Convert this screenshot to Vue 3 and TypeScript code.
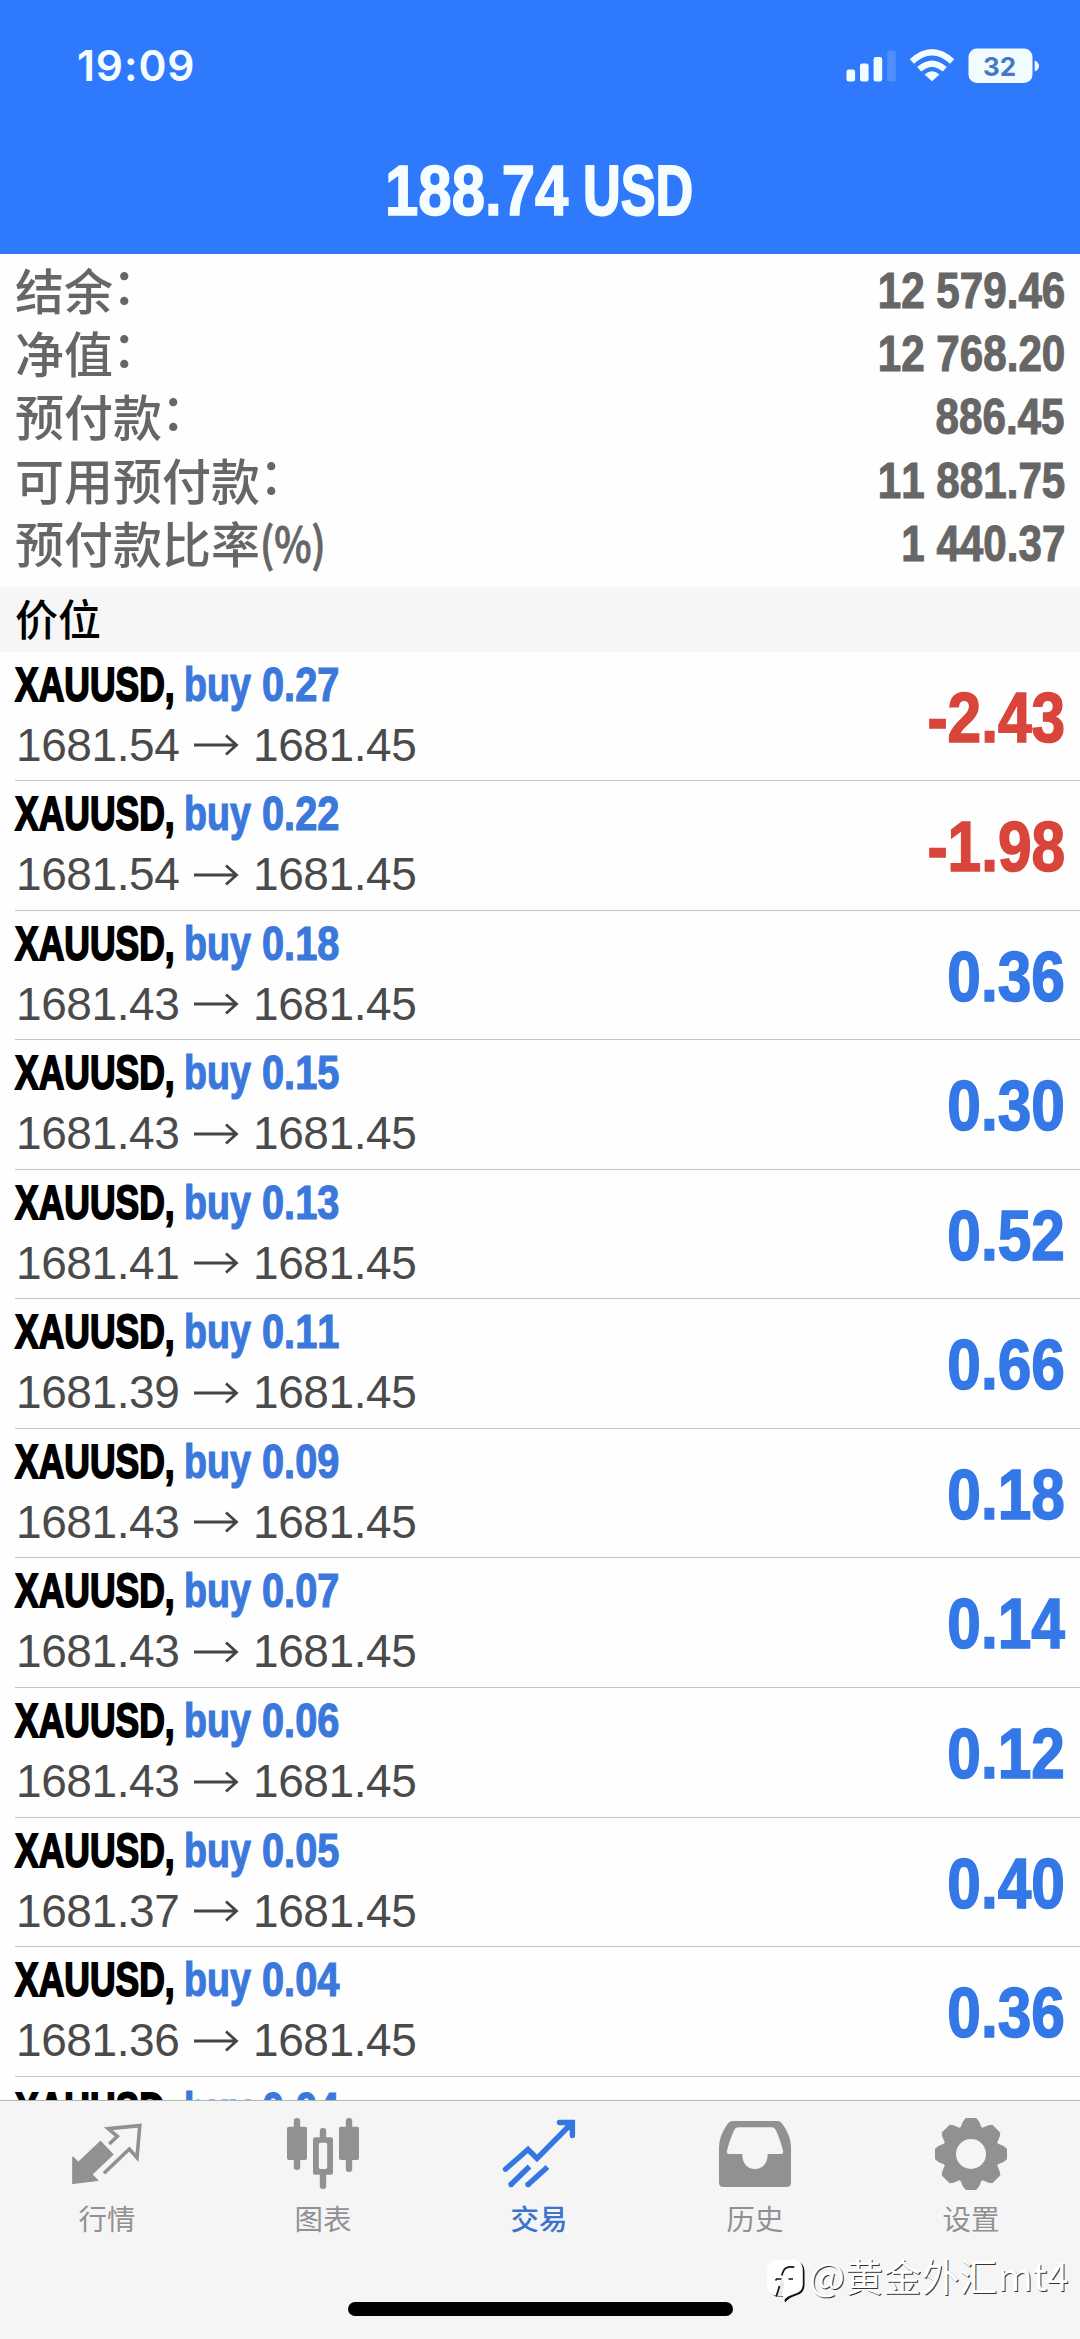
<script setup lang="ts">
interface Position { lot: string; open: string; profit: string }

const summary: { label: string; suffix: string; value: string }[] = [
  { label: '结余', suffix: '：', value: '12 579.46' },
  { label: '净值', suffix: '：', value: '12 768.20' },
  { label: '预付款', suffix: '：', value: '886.45' },
  { label: '可用预付款', suffix: '：', value: '11 881.75' },
  { label: '预付款比率', suffix: '(%)', value: '1 440.37' },
]

const positions: Position[] = [
  { lot: '0.27', open: '1681.54', profit: '-2.43' },
  { lot: '0.22', open: '1681.54', profit: '-1.98' },
  { lot: '0.18', open: '1681.43', profit: '0.36' },
  { lot: '0.15', open: '1681.43', profit: '0.30' },
  { lot: '0.13', open: '1681.41', profit: '0.52' },
  { lot: '0.11', open: '1681.39', profit: '0.66' },
  { lot: '0.09', open: '1681.43', profit: '0.18' },
  { lot: '0.07', open: '1681.43', profit: '0.14' },
  { lot: '0.06', open: '1681.43', profit: '0.12' },
  { lot: '0.05', open: '1681.37', profit: '0.40' },
  { lot: '0.04', open: '1681.36', profit: '0.36' },
  { lot: '0.04', open: '', profit: '' },
]

const current = '1681.45'

// Eight-toothed gear outline around (107, 54)
const gear = (() => {
  const pts: string[] = []
  const tooth: [number, number][] = [[-10, 26.5], [-7.8, 32], [-5.2, 35.5], [5.2, 35.5], [7.8, 32], [10, 26.5]]
  for (let i = 0; i < 8; i++) {
    const a = (i * Math.PI) / 4
    for (const [u, r] of tooth) {
      const x = 107 + u * Math.cos(a) + r * Math.sin(a)
      const y = 54 + u * Math.sin(a) - r * Math.cos(a)
      pts.push(`${x.toFixed(1)} ${y.toFixed(1)}`)
    }
  }
  return `M${pts.join('L')}Z`
})()
</script>

<template>
  <div class="screen" lang="zh-CN">
    <header class="top">
      <div class="status">
        <span class="time">19:09</span>
        <svg class="indicators" width="200" height="44" viewBox="844 44.5 200 44">
          <g fill="#f2fcff">
            <rect x="846.5" y="70" width="8.6" height="12" rx="2.2" />
            <rect x="860" y="64" width="8.6" height="18" rx="2.2" />
            <rect x="873.6" y="57.5" width="8.6" height="24.5" rx="2.2" />
            <rect x="887.2" y="51" width="8.6" height="31" rx="2.2" opacity=".16" />
            <path d="M932 81.8L924.6 75Q932 68.5 939.4 75Z" />
            <rect x="968.5" y="49" width="64" height="34.6" rx="8.5" />
            <path d="M1034.7 61Q1039 62.5 1039 66.5T1034.7 72Z" />
          </g>
          <g fill="none" stroke="#f2fcff" stroke-width="6.2">
            <path d="M911.8 62Q932 43.5 952.2 62" />
            <path d="M919.2 69.8Q932 58.5 944.8 69.8" />
          </g>
          <text x="999.5" y="76" text-anchor="middle" class="level">32</text>
        </svg>
      </div>
      <h1 class="title">
        <span class="sx title-num">188.74</span><span class="sx title-cur">USD</span>
      </h1>
    </header>

    <section class="summary">
      <div v-for="s in summary" :key="s.label" class="sum-row">
        <span class="sum-label">{{ s.label }}<span :class="s.suffix === '：' ? 'colon' : 'percent'">{{ s.suffix }}</span></span>
        <span class="sum-value">{{ s.value }}</span>
      </div>
    </section>

    <h2 class="section">价位</h2>

    <main class="list">
      <article v-for="(p, i) in positions" :key="i" class="row">
        <div class="info">
          <div class="order">
            <span class="sx symbol">XAUUSD,</span>
            <span class="sx side">buy</span>
            <span class="sx lot">{{ p.lot }}</span>
          </div>
          <div v-if="p.open" class="prices">
            <span class="from">{{ p.open }}</span>
            <svg class="arrow" width="46" height="24" viewBox="0 0 46 24">
              <path d="M1 12H43M33 2.5L43.5 12L33 21.5" fill="none" stroke="#444" stroke-width="2.8" />
            </svg>
            <span>{{ current }}</span>
          </div>
        </div>
        <span v-if="p.profit" class="profit" :class="{ loss: p.profit.startsWith('-') }">{{ p.profit }}</span>
      </article>
    </main>

    <nav class="tabs">
      <div class="tab">
        <svg width="216" height="98" viewBox="0 0 216 98">
          <path d="M72.8 57L78.3 62.5L100.5 41.5L112.8 54.5L91.7 74.5L97.8 80.5L72.8 83.5Z" fill="#919193" stroke="#919193" stroke-width="1.2" stroke-linejoin="round" />
          <path d="M109.3 44L117.3 36.3L108.3 28.6L139.8 25.6L137 57.6L129.3 49L104 73.2" fill="none" stroke="#919193" stroke-width="3.6" />
        </svg>
        <span>行情</span>
      </div>
      <div class="tab">
        <svg width="216" height="98" viewBox="0 0 216 98">
          <g fill="#919193">
            <rect x="71" y="26.7" width="20" height="33.3" rx="2" />
            <rect x="77.8" y="18" width="6.4" height="52" rx="3" />
            <rect x="123" y="26.7" width="20" height="33.3" rx="2" />
            <rect x="129.8" y="18" width="6.4" height="54" rx="3" />
            <rect x="103.8" y="28" width="6.4" height="12" rx="3" />
            <rect x="103.8" y="72" width="6.4" height="17" rx="3" />
            <path fill-rule="evenodd" d="M99 37.3H115Q117 37.3 117 39.3V72.7Q117 74.7 115 74.7H99Q97 74.7 97 72.7V39.3Q97 37.3 99 37.3ZM104.5 42.7Q102.8 42.7 102.8 44.5V67.2Q102.8 69 104.5 69H109.5Q111.2 69 111.2 67.2V44.5Q111.2 42.7 109.5 42.7Z" />
          </g>
        </svg>
        <span>图表</span>
      </div>
      <div class="tab active">
        <svg width="216" height="98" viewBox="0 0 216 98">
          <g fill="none" stroke="#3377e2" stroke-width="5.4">
            <path stroke-linecap="round" stroke-linejoin="miter" d="M73.5 69.2L96 49.5L105 58.5L138 25" />
            <path stroke-linecap="round" d="M127.5 22.5H140.4V35.5" />
            <path d="M78 85.5L97.5 66.5M95 85.5L115.5 67" />
          </g>
          <path d="M128 20H143V36Z" fill="#3377e2" />
          <circle cx="79" cy="84.5" r="2.7" fill="#3377e2" />
          <circle cx="96" cy="84.5" r="2.7" fill="#3377e2" />
        </svg>
        <span>交易</span>
      </div>
      <div class="tab">
        <svg width="216" height="98" viewBox="0 0 216 98">
          <path fill="#919193" fill-rule="evenodd" d="M85 21H129Q132.5 21 134.5 24Q143 36 143 47V82.5Q143 87 138.5 87H75.5Q71 87 71 82.5V47Q71 36 79.5 24Q81.5 21 85 21ZM90.5 27.3Q87.5 27.3 86 30.5Q82 39 78.8 51.5Q78.5 54 81 54H94.3C94.3 63 99 69 107 69S119.7 63 119.7 54H133Q135.5 54 135.2 51.5Q132 39 128 30.5Q126.5 27.3 123.5 27.3Z" />
        </svg>
        <span>历史</span>
      </div>
      <div class="tab">
        <svg width="216" height="98" viewBox="0 0 216 98">
          <path :d="gear" fill="#919193" stroke="#919193" stroke-width="1" stroke-linejoin="round" />
          <circle cx="107" cy="54" r="15" fill="#f5f5f6" />
        </svg>
        <span>设置</span>
      </div>
      <div class="home" />
      <div class="watermark">
        <svg width="43" height="48" viewBox="0 0 43 48">
          <path d="M13 5H27Q38.5 5 38.5 16V29Q38.5 37.5 30 39.5Q23 41.5 19 46.5L18 41H13Q4 40 2.5 31V16Z" fill="#111" />
          <path d="M12 3.5H25Q36.8 3.5 36.8 14.5V28Q36.8 36 28.5 38Q21 40 18 44L16.5 40H12Q1 39 1 28.5V14.5Q1 3.5 12 3.5Z" fill="#fff" />
          <path d="M15 24.5L10.5 40.5H16L18.5 24.500Z" fill="#e9e9ea" />
          <path d="M28.3 11.2Q20.500 9.800 18 14Q16.500 16.500 15.800 19.500M13.500 30L10.300 40.500" fill="none" stroke="#111" stroke-width="1.700" />
          <path d="M9.500 24.500L10.500 23H15.500M22.500 23H27" fill="none" stroke="#111" stroke-width="1.500" />
        </svg>
        <span>@黄金外汇mt4</span>
      </div>
    </nav>
  </div>
</template>

<style>
body { margin: 0; }
</style>

<style scoped>
.screen {
  width: 1080px;
  height: 2339px;
  display: flex;
  flex-direction: column;
  overflow: hidden;
  background: #fefefe;
  font-family: "Liberation Sans", "Noto Sans CJK SC", sans-serif;
  font-kerning: none;
}
.top {
  height: 253.5px;
  flex: none;
  background: #2f7afc;
  color: #f5fdff;
}
.status {
  height: 132px;
  display: flex;
  justify-content: space-between;
  align-items: center;
  padding: 0 36px 0 77px;
}
.time {
  font: 570 42.5px "Inter", sans-serif;
  line-height: 50px;
  letter-spacing: .9px;
}
.level { font: 700 26px "Inter", sans-serif; fill: #4676cc; }
.title {
  margin: 0;
  height: 118px;
  display: flex;
  font-size: 70.5px;
  line-height: 118px;
  font-weight: 700;
  padding-left: 385px;
  -webkit-text-stroke: 1.6px currentColor;
}
.sx { display: block; transform-origin: 0 50%; white-space: nowrap; }
.title-num { width: 198px; transform: scaleX(.85); }
.title-cur { transform: scaleX(.74); -webkit-text-stroke: 2px currentColor; }
.summary {
  height: 333.5px;
  flex: none;
  box-sizing: border-box;
  padding: 6px 15px 0 15px;
  color: #666;
}
.sum-row {
  height: 63.4px;
  display: flex;
  justify-content: space-between;
  line-height: 63.4px;
}
.sum-label {
  font: 500 49px "Noto Sans CJK SC", sans-serif;
  line-height: 57.4px;
  white-space: nowrap;
}
.colon { position: relative; top: -6px; left: -1px; }
.percent {
  display: inline-block;
  position: relative;
  top: -1px;
  font-size: 47px;
  line-height: 50px;
  transform: scaleX(.845);
  transform-origin: 0 50%;
  -webkit-text-stroke: 1px currentColor;
}
.sum-value {
  font-weight: 700;
  font-size: 50.2px;
  transform: scaleX(.84);
  transform-origin: 100% 50%;
  -webkit-text-stroke: 1.1px currentColor;
}
.section {
  margin: 0;
  height: 64.5px;
  flex: none;
  padding-left: 15px;
  background: #f6f6f6;
  color: #000;
  font: 500 43px "Noto Sans CJK SC", sans-serif;
  line-height: 60px;
}
.list { height: 1448px; flex: none; overflow: hidden; }
.row {
  height: 129.57px;
  box-sizing: border-box;
  margin-left: 15px;
  padding-right: 15px;
  border-bottom: 1.5px solid #c4c5c6;
  display: flex;
  justify-content: space-between;
}
.order {
  height: 65px;
  display: flex;
  font-weight: 700;
  font-size: 47.3px;
  line-height: 65px;
  color: #3b78dc;
  -webkit-text-stroke: 1.2px currentColor;
}
.symbol { width: 169px; color: #000; transform: scaleX(.75); -webkit-text-stroke: 1.8px currentColor; }
.side { width: 78px; transform: scaleX(.795); }
.lot { transform: scaleX(.84); }
.prices {
  display: flex;
  align-items: center;
  height: 57px;
  font-size: 46px;
  line-height: 57px;
  letter-spacing: -.4px;
  color: #4a4a4a;
}
.from { width: 178px; padding-left: 1px; box-sizing: border-box; }
.arrow { margin-right: 14px; }
.profit {
  font-weight: 700;
  font-size: 69.8px;
  line-height: 132px;
  color: #3478e8;
  transform: scaleX(.865);
  transform-origin: 100% 50%;
  -webkit-text-stroke: 1.6px currentColor;
}
.profit.loss { color: #d9453a; }
.tabs {
  position: relative;
  flex: none;
  height: 239.5px;
  box-sizing: border-box;
  border-top: 1.5px solid #b0b8b4;
  background: #f5f5f6;
  display: flex;
}
.tab {
  width: 216px;
  display: flex;
  flex-direction: column;
  align-items: center;
  color: #919193;
  font: 400 28.5px "Noto Sans CJK SC", sans-serif;
}
.tab svg { display: block; margin-top: -1px; }
.tab span { line-height: 40px; margin-right: 2px; }
.tab.active { color: #3b74cc; font-weight: 500; }
.home {
  position: absolute;
  left: 348px;
  top: 201px;
  width: 385px;
  height: 14.5px;
  border-radius: 8px;
  background: #000;
}
.watermark {
  position: absolute;
  left: 766px;
  top: 155px;
  display: flex;
  color: #fff;
  font: 400 38px "Noto Sans CJK SC", sans-serif;
  line-height: 38px;
  letter-spacing: .1px;
  text-shadow: 1px 1px .5px #333;
  white-space: nowrap;
}
</style>
